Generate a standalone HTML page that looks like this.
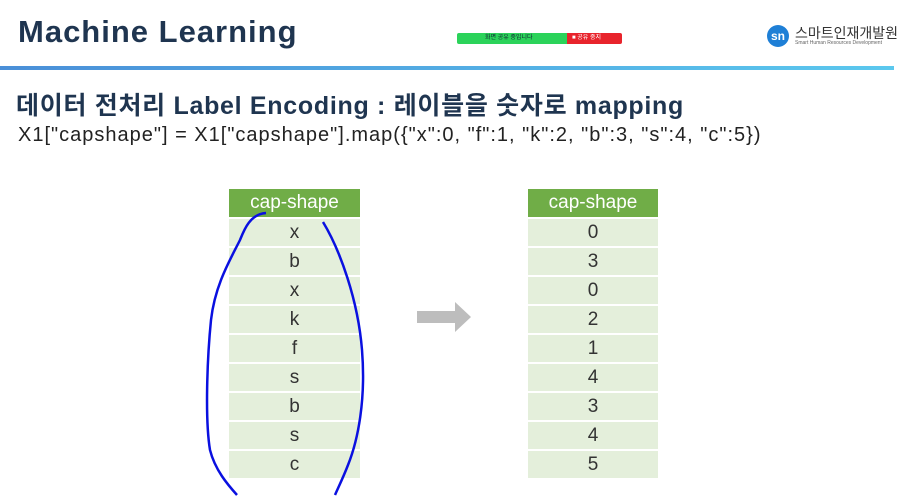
<!DOCTYPE html>
<html><head><meta charset="utf-8"><style>
body{margin:0;width:905px;height:498px;background:#fff;position:relative;overflow:hidden;font-family:"Liberation Sans","Noto Sans CJK KR",sans-serif}
.a{position:absolute;white-space:nowrap}
table{position:absolute;border-collapse:collapse}
td{height:27px;padding:0;text-align:center;font-size:19px;color:#333;background:#e4efdb;border-bottom:2px solid #fff}
th{height:28px;padding:0;background:#70ad47;color:#fff;font-weight:normal;font-size:19px;border-bottom:2px solid #fff}
</style></head><body>
<div class="a" style="left:18px;top:14px;font-size:31px;font-weight:bold;color:#1f3550;letter-spacing:1px">Machine Learning</div>
<div class="a" style="left:457px;top:33px;width:110px;height:11px;background:#2bd35a;border-radius:2px 0 0 2px;font-size:6px;color:#123;line-height:11px"><span style="margin-left:28px">화면 공유 중입니다</span></div>
<div class="a" style="left:567px;top:33px;width:55px;height:11px;background:#e8242c;border-radius:0 2px 2px 0;font-size:6px;color:#fff;line-height:11px"><span style="margin-left:5px">■ 공유 중지</span></div>
<div class="a" style="left:767px;top:25px;width:22px;height:22px;border-radius:50%;background:#1e7fd6;color:#fff;font-size:12px;font-weight:bold;text-align:center;line-height:22px">sn</div>
<div class="a" style="left:795px;top:23px;font-size:14px;color:#333">스마트인재개발원</div>
<div class="a" style="left:795px;top:40px;font-size:5px;color:#666">Smart Human Resources Development</div>
<div class="a" style="left:0;top:66px;width:894px;height:4px;background:linear-gradient(90deg,#4a8fd8,#5bc8ee)"></div>
<div class="a" style="left:16px;top:86px;font-size:25px;font-weight:bold;color:#1f3550;letter-spacing:0.7px">데이터 전처리 Label Encoding : 레이블을 숫자로 mapping</div>
<div class="a" style="left:18px;top:124px;font-size:20px;color:#222;letter-spacing:1px">X1["capshape"] = X1["capshape"].map({"x":0, "f":1, "k":2, "b":3, "s":4, "c":5})</div>
<table style="left:229px;top:189px;width:131px"><tr><th>cap-shape</th></tr>
<tr><td>x</td></tr><tr><td>b</td></tr><tr><td>x</td></tr><tr><td>k</td></tr><tr><td>f</td></tr><tr><td>s</td></tr><tr><td>b</td></tr><tr><td>s</td></tr><tr><td>c</td></tr></table>
<table style="left:528px;top:189px;width:130px"><tr><th>cap-shape</th></tr>
<tr><td>0</td></tr><tr><td>3</td></tr><tr><td>0</td></tr><tr><td>2</td></tr><tr><td>1</td></tr><tr><td>4</td></tr><tr><td>3</td></tr><tr><td>4</td></tr><tr><td>5</td></tr></table>
<svg class="a" style="left:0;top:0" width="905" height="498">
<polygon points="417,311 455,311 455,302 471,317 455,332 455,323 417,323" fill="#bdbdbd"/>
<path d="M266,213 C250,214 244,230 240,240 C230,260 215,285 211,320 C207,360 205,420 210,450 C215,470 228,485 237,495" fill="none" stroke="#0a10e0" stroke-width="2.5"/>
<path d="M323,222 C340,250 358,300 362,350 C366,400 358,440 348,465 C343,478 338,488 335,495" fill="none" stroke="#0a10e0" stroke-width="2.5"/>
</svg>
</body></html>
